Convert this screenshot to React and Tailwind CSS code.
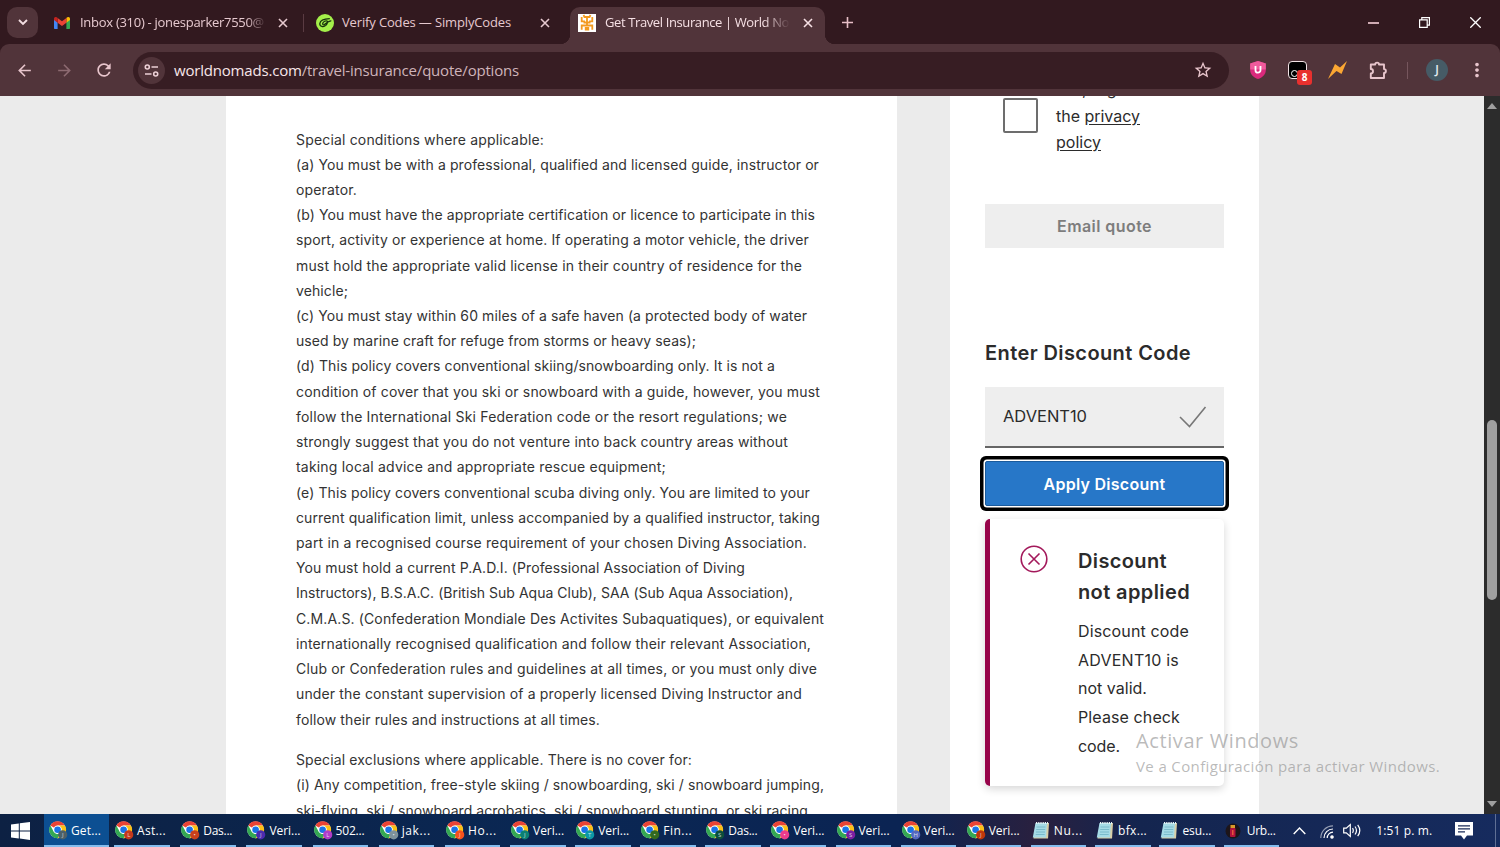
import { useLayoutEffect, useRef, useState } from 'react';
import { MdArrowBack, MdArrowForward, MdRefresh, MdStarBorder, MdMoreVert } from 'react-icons/md';

const conditions = [
  ['Special conditions where applicable:', 248],
  ['(a) You must be with a professional, qualified and licensed guide, instructor or', 523],
  ['operator.', 61],
  ['(b) You must have the appropriate certification or licence to participate in this', 519],
  ['sport, activity or experience at home. If operating a motor vehicle, the driver', 513],
  ['must hold the appropriate valid license in their country of residence for the', 506],
  ['vehicle;', 52],
  ['(c) You must stay within 60 miles of a safe haven (a protected body of water', 511],
  ['used by marine craft for refuge from storms or heavy seas);', 400],
  ['(d) This policy covers conventional skiing/snowboarding only. It is not a', 479],
  ['condition of cover that you ski or snowboard with a guide, however, you must', 524],
  ['follow the International Ski Federation code or the resort regulations; we', 491],
  ['strongly suggest that you do not venture into back country areas without', 492],
  ['taking local advice and appropriate rescue equipment;', 370],
  ['(e) This policy covers conventional scuba diving only. You are limited to your', 514],
  ['current qualification limit, unless accompanied by a qualified instructor, taking', 524],
  ['part in a recognised course requirement of your chosen Diving Association.', 511],
  ['You must hold a current P.A.D.I. (Professional Association of Diving', 449],
  ['Instructors), B.S.A.C. (British Sub Aqua Club), SAA (Sub Aqua Association),', 497],
  ['C.M.A.S. (Confederation Mondiale Des Activites Subaquatiques), or equivalent', 528],
  ['internationally recognised qualification and follow their relevant Association,', 515],
  ['Club or Confederation rules and guidelines at all times, or you must only dive', 521],
  ['under the constant supervision of a properly licensed Diving Instructor and', 506],
  ['follow their rules and instructions at all times.', 304],
];

const exclusions = [
  ['Special exclusions where applicable. There is no cover for:', 396],
  ['(i) Any competition, free-style skiing / snowboarding, ski / snowboard jumping,', 528],
  ['ski-flying, ski / snowboard acrobatics, ski / snowboard stunting, or ski racing', 512],
];

const tasks = [
  { label: 'Ast...', badge: '#c4381c', letter: 'L' },
  { label: 'Das...', badge: '#c8401c', letter: '•' },
  { label: 'Veri...', badge: '#4a2bb0', letter: 'J' },
  { label: '502...', badge: '#b03cc8', letter: 'L' },
  { label: 'jak...', badge: '#7d919c', letter: '•' },
  { label: 'Ho...', badge: '#f4511e', letter: 'J' },
  { label: 'Veri...', badge: '#0b8073', letter: 'J' },
  { label: 'Veri...', badge: '#0c98a6', letter: 'T' },
  { label: 'Fin...', badge: '#33691e', letter: '•' },
  { label: 'Das...', badge: '#0b4f3c', letter: 'S' },
  { label: 'Veri...', badge: '#ec3c8c', letter: '•' },
  { label: 'Veri...', badge: '#7b1fa2', letter: 'S' },
  { label: 'Veri...', badge: '#5468c0', letter: 'H' },
  { label: 'Veri...', badge: '#bf360c', letter: 'J' },
  { label: 'Nu...', type: 'notepad' },
  { label: 'bfx...', type: 'notepad' },
  { label: 'esu...', type: 'notepad' },
  { label: 'Urb...', type: 'urban' },
];

// Tracks the text so that it takes up exactly `w` pixels
const Fit = ({ w, children, className = '' }) => {
  const ref = useRef(null);
  const [spacing, setSpacing] = useState(0);

  useLayoutEffect(() => {
    const el = ref.current;
    el.style.letterSpacing = '0px';
    const natural = el.getBoundingClientRect().width;
    const next = (w - natural) / el.textContent.length;
    el.style.letterSpacing = `${next}px`;
    setSpacing(next);
  }, [w]);

  return (
    <span ref={ref} className={`inline-block whitespace-nowrap ${className}`} style={{ letterSpacing: `${spacing}px` }}>
      {children}
    </span>
  );
};

const CloseIcon = () => (
  <svg className="w-[10px] h-[10px] shrink-0" viewBox="0 0 10 10" stroke="currentColor" strokeWidth="1.6" fill="none">
    <path d="M1 1l8 8M9 1L1 9" />
  </svg>
);

const ChromeIcon = ({ badge, letter }) => (
  <svg className="w-[19px] h-[19px] shrink-0" viewBox="0 0 19 19">
    <circle cx="8.6" cy="8.8" r="8.4" fill="#fff" />
    <path d="M8.6 8.8L1.3 4.6A8.4 8.4 0 0 1 15.9 4.6H8.6z" fill="#ea4335" />
    <path d="M8.6 4.6h7.3a8.4 8.4 0 0 1-7.3 12.6l3.7-6.3z" fill="#fbc116" />
    <path d="M1.3 4.6l3.6 6.3 3.7 2.1 2.4-.5-2.4 4.7A8.4 8.4 0 0 1 1.3 4.6z" fill="#34a853" />
    <circle cx="8.6" cy="8.8" r="4.2" fill="#fff" />
    <circle cx="8.6" cy="8.8" r="3.3" fill="#1a73e8" />
    <circle cx="13.7" cy="13.8" r="4.6" fill={badge} />
    <text x="13.7" y="16" fontSize="6" fontFamily="Open Sans, sans-serif" textAnchor="middle" fill="#fff" fillOpacity="0.75">
      {letter}
    </text>
  </svg>
);

const NotepadIcon = () => (
  <svg className="w-[19px] h-[19px] shrink-0" viewBox="0 0 19 19">
    <path d="M4 2h13l-1 15.5H1.5z" fill="#d8cfa8" />
    <path d="M3.5 2H15l-1 14.5H.8z" fill="#a5dbe6" />
    <path d="M4.5 6h9M4.2 8.5h9M4 11h9M3.7 13.5h9" stroke="#6fb2c4" strokeWidth=".8" />
    <path d="M4 2h12" stroke="#e9f4f6" strokeWidth="2" strokeDasharray="1.2 1" />
  </svg>
);

const UrbanIcon = () => (
  <svg className="w-[19px] h-[19px] shrink-0" viewBox="0 0 19 19">
    <circle cx="8" cy="10" r="7.5" fill="#1d1519" />
    <rect x="5" y="7" width="5.5" height="9" rx="1" fill="#b3123c" />
    <rect x="5.5" y="4" width="4.5" height="3" fill="#d99a2b" />
    <path d="M7.8 9v5" stroke="#f06a3c" strokeWidth="1.2" />
  </svg>
);

const TabStrip = () => (
  <div className="flex h-[44px] bg-[#32191f] text-[#e6c9cf] text-[13px] shrink-0">
    <div className="w-[31px] h-[31px] mt-[7px] ml-[7px] rounded-[10px] bg-[#51343a] flex items-center justify-center shrink-0">
      <svg className="w-[10px] h-[7px]" viewBox="0 0 10 7" fill="none" stroke="#f3dde1" strokeWidth="1.9">
        <path d="M1 1l4 4 4-4" />
      </svg>
    </div>

    <div className="flex items-center h-[46px] w-[265px] pl-4 shrink-0">
      <svg className="w-4 h-3 shrink-0" viewBox="0 0 16 12">
        <path d="M0 2v9.2a.8.8 0 0 0 .8.8h2.8V5.5z" fill="#4285f4" />
        <path d="M12.4 12h2.8a.8.8 0 0 0 .8-.8V2l-3.6 3z" fill="#34a853" />
        <path d="M12.4 1v4.8L16 3V1.7C16 0 14 -.5 12.9.5z" fill="#fbbc04" />
        <path d="M3.6 5.8V1L8 4.3 12.4 1v4.8L8 9z" fill="#ea4335" />
        <path d="M0 1.7V3l3.6 2.8V1L3.1.5C2-.5 0 0 0 1.7z" fill="#c5221f" />
      </svg>
      <div className="w-[185px] ml-[10px] overflow-hidden shrink-0 [mask-image:linear-gradient(to_right,black_90%,transparent_101%)]">
        <Fit w={184}>Inbox (310) - jonesparker7550@</Fit>
      </div>
      <div className="ml-[13px]"><CloseIcon /></div>
    </div>

    <div className="w-px h-[18px] mt-[14px] bg-[#5a3b42] shrink-0"></div>

    <div className="flex items-center h-[46px] w-[266px] pl-3 shrink-0">
      <svg className="w-[18px] h-[18px] shrink-0" viewBox="0 0 18 18">
        <circle cx="9" cy="9" r="9" fill="#a4f04a" />
        <path d="M13.8 4.7C10.8 4.8 4.2 5.8 3.8 9.6c-.2 3 3.7 4 6 1.8 1.3-1.3 2.2-3.6 1.3-4.3-1.2-.9-4 .5-4.4 2.4-.3 1.3 1 1.7 2 .9 1.2-.9 4.2-3.8 6.6-3.5" fill="none" stroke="#17320c" strokeWidth="1.3" />
      </svg>
      <div className="w-[198px] ml-2 shrink-0"><Fit w={169}>Verify Codes — SimplyCodes</Fit></div>
      <CloseIcon />
    </div>

    <div className="relative flex items-center w-[255px] h-[37px] mt-[7px] pb-[5px] pl-[8px] rounded-t-[10px] bg-[#51343a] text-[#f6e0e4] shrink-0">
      <span className="absolute -left-[10px] bottom-0 w-[10px] h-[10px] bg-[radial-gradient(circle_at_0_0,#32191f_10px,#51343a_10.5px)]"></span>
      <span className="absolute -right-[10px] bottom-0 w-[10px] h-[10px] bg-[radial-gradient(circle_at_100%_0,#32191f_10px,#51343a_10.5px)]"></span>
      <svg className="w-[18px] h-[18px] shrink-0" viewBox="0 0 18 18">
        <path d="M0 0h18v18H0z" fill="#fff" />
        <path d="M5.5 1l1 2h5l1-2M3.700 3v4.300h3.300M14.300 3v4.300H11M9 3.500v8M5.500 8.500h7M3.700 15.800v-4.300h10.600v4.300" fill="none" stroke="#f39a1f" strokeWidth="1.800" />
        <path d="M6.800 13h4.400v3.500H6.800z" fill="#f39a1f" />
      </svg>
      <div className="w-[185px] ml-[9px] overflow-hidden shrink-0 [mask-image:linear-gradient(to_right,black_86%,transparent_100%)]">
        <Fit w={184}>Get Travel Insurance | World No</Fit>
      </div>
      <div className="ml-[13px]"><CloseIcon /></div>
    </div>

    <svg className="w-[11px] h-[11px] mt-[17px] ml-[17px] shrink-0" viewBox="0 0 11 11" stroke="#e8bfc7" strokeWidth="1.6">
      <path d="M5.500 0v11M0 5.500h11" />
    </svg>

    <div className="flex items-center h-[45px] ml-auto mr-[19px] text-white">
      <span className="w-[11px] h-[2px] mr-[40px] bg-[#cfaab2]"></span>
      <svg className="w-[11px] h-[11px] mr-[40px]" viewBox="0 0 11 11" fill="none" stroke="currentColor" strokeWidth="1.2">
        <path d="M.6 2.800h7.600v7.600H.6zM2.800 2.800V.6h7.600v7.600H8.200" />
      </svg>
      <svg className="w-[11px] h-[11px]" viewBox="0 0 11 11" fill="none" stroke="currentColor" strokeWidth="1.3">
        <path d="M.3.3l10.400 10.400M10.700.3L.3 10.700" />
      </svg>
    </div>
  </div>
);

const Toolbar = () => (
  <div className="h-[52px] bg-[#32191f] shrink-0">
    <div className="flex items-center h-full rounded-t-[9px] bg-[#51343a] text-[#e8c5cc]">
      <MdArrowBack className="w-[19px] h-[19px] ml-[15px]" />
      <MdArrowForward className="w-[19px] h-[19px] ml-[21px] text-[#8d6a71]" />
      <MdRefresh className="w-5 h-5 ml-5" />

      <div className="flex items-center w-[1096px] h-[37px] ml-[19px] rounded-full bg-[#371d23]">
        <span className="w-[27px] h-[27px] ml-[5px] rounded-full bg-[#51343a] flex items-center justify-center">
          <svg className="w-[15px] h-[13px]" viewBox="0 0 15 13" fill="none" stroke="#ecd0d6" strokeWidth="1.6">
            <circle cx="3.300" cy="3" r="2" />
            <path d="M7.500 3H14M1 10h6.500" />
            <circle cx="11.700" cy="10" r="2" />
          </svg>
        </span>
        <div className="ml-[9px] text-[15px] leading-5 text-[#cfb4ba]">
          <Fit w={345}><span className="text-[#f7e6e9]">worldnomads.com</span>/travel-insurance/quote/options</Fit>
        </div>
        <MdStarBorder className="w-5 h-5 ml-auto mr-4" />
      </div>

      <svg className="w-4 h-[18px] ml-[21px]" viewBox="0 0 16 18">
        <path d="M8 0l7.800 2.600v6.600c0 4.300-3.600 7.400-7.800 8.800C3.800 16.600.2 13.500.2 9.200V2.600z" fill="#d92a7c" />
        <path d="M8 0l7.800 2.600v5.900H.2V2.600z" fill="#ee5b9c" />
        <path d="M5.500 5v4.200a2.500 2.500 0 0 0 5 0V5" fill="none" stroke="#fff" strokeWidth="1.800" />
      </svg>

      <div className="relative w-[19px] h-[18px] ml-[22px] rounded-[4px] border-[1.500px] border-[#f3e4e6] bg-black">
        <span className="absolute left-[2px] bottom-px w-[7px] h-[7px] rounded-full border-[1.500px] border-white"></span>
        <span className="absolute left-[8px] top-[8px] w-[15px] h-[15px] rounded-[3px] bg-[#e8302e] text-white text-[10px] leading-[15px] font-bold text-center">8</span>
      </div>

      <svg className="w-[19px] h-[18px] ml-[21px]" viewBox="0 0 19 18">
        <path d="M7 3l5 3.500L19 0l-5.500 13-5-3L0 18z" fill="#fba733" />
      </svg>
      <svg className="w-[19px] h-[19px] ml-[22px]" viewBox="0 0 19 19" fill="none" stroke="currentColor" strokeWidth="1.900" strokeLinejoin="round">
        <path d="M1.800 3.500h4.400a1.900 1.900 0 0 1 3.800 0h5v4.600a1.900 1.900 0 0 1 0 3.800V17H1.800v-4.600a2.200 2.200 0 0 0 0-4.400z" />
      </svg>
      <span className="w-px h-[17px] ml-[19px] bg-[#76565d]"></span>
      <span className="w-[22px] h-[22px] ml-[18px] rounded-full bg-[#465b66] text-[#e4edf0] text-[12px] font-semibold flex items-center justify-center">J</span>
      <MdMoreVert className="w-[22px] h-[22px] ml-[18px]" />
    </div>
  </div>
);

const Lines = ({ lines }) => lines.map(([text, w]) => (
  <p key={text} className="h-[25.22px]"><Fit w={w}>{text}</Fit></p>
));

const DiscountPanel = () => (
  <aside className="w-[309px] h-full ml-[53px] px-[35px] bg-white text-[#2b2b2b] shrink-0">
    <div className="flex h-[108px] pl-[18px]">
      <span className="w-[35px] h-[35px] mt-[2px] rounded-[2px] border-2 border-[#6d6d6d] shrink-0"></span>
      <div className="-mt-[20px] ml-[18px] text-[16px] leading-[26.500px]">
        <p><Fit w={101}>Yes, I agree to</Fit></p>
        <p><Fit w={84}>the <u className="underline-offset-2">privacy</u></Fit></p>
        <p><Fit w={45}><u className="underline-offset-2">policy</u></Fit></p>
      </div>
    </div>

    <button className="w-full h-[44px] bg-[#eeeeee] text-[#7d7d7d] text-[16px] font-semibold flex items-center justify-center">
      <Fit w={95}>Email quote</Fit>
    </button>

    <h3 className="mt-[90px] text-[20px] leading-[30px] font-semibold"><Fit w={206}>Enter Discount Code</Fit></h3>

    <div className="flex items-center h-[61px] mt-[19px] pl-[18px] pr-[17px] bg-[#eeeeee] border-b-2 border-[#666]">
      <span className="text-[16.500px]"><Fit w={84}>ADVENT10</Fit></span>
      <svg className="w-[28px] h-[22px] ml-auto" viewBox="0 0 28 22" fill="none" stroke="#777" strokeWidth="1.600">
        <path d="M1 11l9.500 9.500L26.500 1" />
      </svg>
    </div>

    <button className="w-full h-[45px] mt-[13px] rounded-[2px] border border-[#195a9c] bg-[#2777c8] text-white text-[16px] font-semibold flex items-center justify-center shadow-[0_0_0_1.500px_#fff,0_0_0_5px_#000]">
      <Fit w={122}>Apply Discount</Fit>
    </button>

    <div className="flex h-[267px] mt-[13px] pl-[30px] rounded-[5px] border-l-[5px] border-[#97044a] shadow-[0_3px_8px_rgba(0,0,0,0.16)]">
      <svg className="w-[28px] h-[28px] mt-[26px] shrink-0" viewBox="0 0 28 28" fill="none" stroke="#a3195b" strokeWidth="1.600">
        <circle cx="14" cy="14" r="12.800" />
        <path d="M8.500 8.500l11 11M19.500 8.500l-11 11" />
      </svg>
      <div className="mt-[27px] ml-[30px]">
        <h4 className="text-[20px] leading-[31px] font-semibold">
          <Fit w={89}>Discount</Fit><br />
          <Fit w={112}>not applied</Fit>
        </h4>
        <div className="mt-[9px] text-[16px] leading-[28.700px]">
          <p><Fit w={111}>Discount code</Fit></p>
          <p><Fit w={101}>ADVENT10 is</Fit></p>
          <p><Fit w={69}>not valid.</Fit></p>
          <p><Fit w={102}>Please check</Fit></p>
          <p><Fit w={42}>code.</Fit></p>
        </div>
      </div>
    </div>
  </aside>
);

const Scrollbar = () => (
  <div className="flex flex-col items-center w-4 h-full ml-auto pt-[7px] pb-[7px] bg-[#2c2c2c] shrink-0">
    <svg className="w-[10px] h-[6px]" viewBox="0 0 10 6"><path d="M5 0l5 6H0z" fill="#9f9f9f" /></svg>
    <div className="w-[10px] h-[180px] mt-[311px] rounded-full bg-[#9f9f9f]"></div>
    <svg className="w-[10px] h-[6px] mt-auto" viewBox="0 0 10 6"><path d="M5 6L0 0h10z" fill="#9f9f9f" /></svg>
  </div>
);

const TaskItem = ({ task }) => (
  <div className="flex items-center w-[55.500px] h-full pt-[2px] pl-px gap-[3px] border-b-2 border-[#84bdee] whitespace-nowrap shrink-0">
    {task.type === 'notepad' && <NotepadIcon />}
    {task.type === 'urban' && <UrbanIcon />}
    {!task.type && <ChromeIcon badge={task.badge} letter={task.letter} />}
    <Fit w={task.label.length > 6 ? 31 : 29}>{task.label}</Fit>
  </div>
);

const Taskbar = () => (
  <footer className="flex items-center h-[33px] shrink-0 text-white text-[12px] bg-[linear-gradient(to_right,#0d2143,#0a2753_35%,#0b2453_60%,#29203f_69%,#14254f_76%,#162b5e)]">
    <div className="w-[44px] pl-[11px] shrink-0">
      <svg className="w-[19px] h-[18px]" viewBox="0 0 19 18" fill="#fff">
        <path d="M0 2.600l7.800-1.100v7H0zM8.800 1.300L19 0v8.500H8.800zM0 9.500h7.800v7L0 15.400zM8.800 9.500H19V18L8.800 16.600z" />
      </svg>
    </div>

    <div className="flex items-center w-[65px] h-full pt-[2px] pl-[5px] gap-[3px] bg-[#0c4f92] border-b-2 border-[#84bdee] shrink-0">
      <ChromeIcon badge="#4c6068" letter="J" />
      <Fit w={30}>Get...</Fit>
    </div>

    <div className="flex h-full ml-[5px] gap-[10.700px] shrink-0">
      {tasks.slice(0, 5).map((task, i) => <TaskItem key={i} task={task} />)}
    </div>
    <div className="flex h-full ml-[10.700px] gap-[9.600px] shrink-0">
      {tasks.slice(5, 14).map((task, i) => <TaskItem key={i} task={task} />)}
    </div>
    <div className="flex h-full ml-[9.600px] gap-[8.800px] shrink-0">
      {tasks.slice(14).map((task, i) => <TaskItem key={i} task={task} />)}
    </div>

    <div className="flex items-center h-full ml-[14px] grow">
      <svg className="w-[13px] h-[8px]" viewBox="0 0 13 8" fill="none" stroke="#fff" strokeWidth="1.400"><path d="M.7 7l5.800-6 5.800 6" /></svg>
      <svg className="w-[14px] h-[14px] mt-[3px] ml-[14px]" viewBox="0 0 14 14" fill="none" stroke="#fff" strokeWidth="1.200">
        <path d="M.8 13A12.200 12.200 0 0 1 13 .8" opacity=".55" />
        <path d="M4 13a9 9 0 0 1 9-9M7.200 13A5.800 5.800 0 0 1 13 7.200" />
        <circle cx="12" cy="12" r="1.200" fill="#fff" />
      </svg>
      <svg className="w-[19px] h-[15px] ml-[9px]" viewBox="0 0 19 15" fill="none" stroke="#fff" strokeWidth="1.200">
        <path d="M.7 5.200h2.600l4-3.700v12l-4-3.700H.7zM9.500 5.200q1.600 2.300 0 4.600M12 3.500q3 4 0 8M14.700 1.800q4.200 5.700 0 11.400" />
      </svg>
      <span className="ml-[14px] pt-px"><Fit w={56}>1:51 p. m.</Fit></span>
      <svg className="w-[18px] h-[18px] ml-[23px]" viewBox="0 0 18 18">
        <path d="M0 0h18v13.500h-6L9 17.500l-3-4H0z" fill="#fff" />
        <path d="M3 3.800h12M3 6.800h12M3 9.800h7" stroke="#1a2b58" strokeWidth="1.200" />
      </svg>
      <span className="w-px h-full ml-auto mr-[4px] bg-[#5f6f94]"></span>
    </div>
  </footer>
);

const App = () => (
  <div className="relative flex flex-col w-[1500px] h-[847px] overflow-hidden font-['Open_Sans',sans-serif]">
    <TabStrip />
    <Toolbar />

    <main className="flex h-[718px] pl-[226px] bg-[#ebebeb] overflow-hidden shrink-0 font-['Inter',sans-serif]">
      <article className="w-[671px] h-full pt-[30.500px] pl-[70px] bg-white text-[#333] text-[14px] leading-[25.220px] shrink-0">
        <Lines lines={conditions} />
        <div className="mt-[15.500px]">
          <Lines lines={exclusions} />
        </div>
      </article>
      <DiscountPanel />
      <Scrollbar />
    </main>

    <Taskbar />

    <div className="absolute left-[1136px] top-[727px] text-[#8c8c8c]/60">
      <p className="text-[20px] leading-7"><Fit w={163}>Activar Windows</Fit></p>
      <p className="text-[15px] leading-[22px]"><Fit w={304}>Ve a Configuración para activar Windows.</Fit></p>
    </div>
  </div>
);

export default App;
